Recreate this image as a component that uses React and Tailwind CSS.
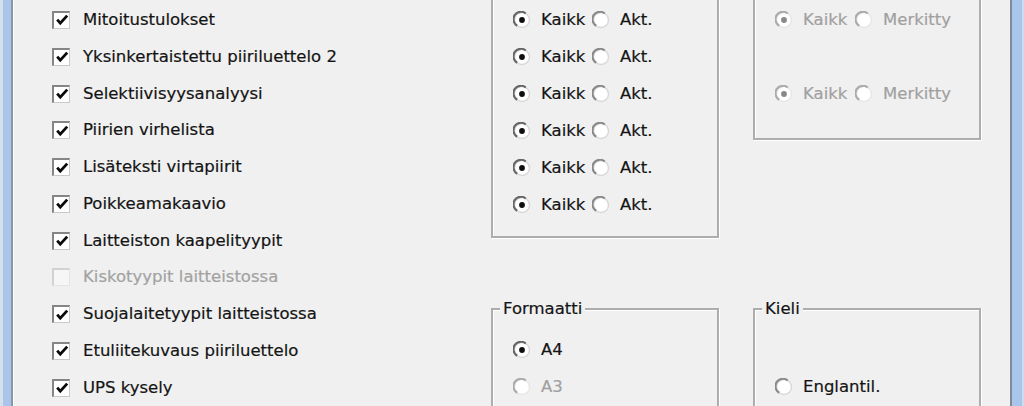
import React from "react";

const FONT = { fontFamily: '"DejaVu Sans", Verdana, sans-serif' };

function Check({ checked, disabled }) {
  return (
    <span
      className={
        "w-[18px] h-[18px] shrink-0 flex items-center justify-center border-t-2 border-l-2 border-r border-b " +
        (disabled
          ? "border-t-[#d2d2d2] border-l-[#d2d2d2] border-r-[#e4e4e4] border-b-[#e4e4e4] bg-[#f6f6f6]"
          : "border-t-[#858585] border-l-[#858585] border-r-[#c9c9c9] border-b-[#c9c9c9] bg-white")
      }
    >
      {checked && (
        <svg width="14" height="14" viewBox="0 0 14 14">
          <path d="M2.2 6.6 L5.3 10.2 L12.2 2.6" fill="none" stroke="#0a0a0a" strokeWidth="2.8" strokeLinejoin="miter" />
        </svg>
      )}
    </span>
  );
}

function Radio({ checked, disabled }) {
  const ring = disabled ? "#ababab" : checked ? "#666666" : "#8a8a8a";
  const rim = disabled ? "#e6e6e6" : "#d8d8d8";
  return (
    <svg width="18" height="18" viewBox="0 0 18 18" className="shrink-0">
      <circle cx="9" cy="9" r="7.5" fill="#ffffff" stroke={rim} strokeWidth="1.4" />
      <path d="M12.75 2.5 A7.5 7.5 0 1 0 4.18 14.75" fill="none" stroke={ring} strokeWidth="2.2" />
      {checked && <circle cx="9" cy="9" r="2.9" fill={disabled ? "#888888" : "#0f0f0f"} />}
    </svg>
  );
}

function RadioItem({ checked, disabled, label, w }) {
  return (
    <div className={"flex items-center gap-[10px] " + (w || "")}>
      <Radio checked={checked} disabled={disabled} />
      <span className={disabled ? "text-[#a0a0a0]" : "text-[#141414]"}>{label}</span>
    </div>
  );
}

const checks = [
  ["Mitoitustulokset", true, false],
  ["Yksinkertaistettu piiriluettelo 2", true, false],
  ["Selektiivisyysanalyysi", true, false],
  ["Piirien virhelista", true, false],
  ["Lisäteksti virtapiirit", true, false],
  ["Poikkeamakaavio", true, false],
  ["Laitteiston kaapelityypit", true, false],
  ["Kiskotyypit laitteistossa", false, true],
  ["Suojalaitetyypit laitteistossa", true, false],
  ["Etuliitekuvaus piiriluettelo", true, false],
  ["UPS kysely", true, false],
];

const boxCls =
  "border-2 border-[#adadad] shadow-[inset_1px_1px_0_#ffffff,1px_1px_0_#ffffff]";

export default function App() {
  return (
    <div
      className="w-[1024px] h-[406px] overflow-hidden flex bg-[#f0f0f0] text-[16.5px] leading-[20px] [-webkit-text-stroke:0.2px_currentColor]"
      style={FONT}
    >
      {/* left window frame */}
      <div className="flex shrink-0 h-full">
        <div className="w-[3px] bg-[#d6e0ec]" />
        <div className="w-[8px] bg-[#a9c6ea]" />
        <div className="w-[2px] bg-[#8b96a3]" />
        <div className="w-[1px] bg-white" />
      </div>

      {/* content */}
      <div className="flex-1 flex">
        {/* checkbox column */}
        <div className="w-[477px] shrink-0 pl-[38px] pt-[1.6px] flex flex-col">
          {checks.map(([label, checked, disabled]) => (
            <div key={label} className="h-[37.2px] flex items-center gap-[13px]">
              <Check checked={checked} disabled={disabled} />
              <span className={disabled ? "text-[#a2a2a2]" : "text-[#141414]"}>{label}</span>
            </div>
          ))}
        </div>

        {/* middle column */}
        <div className="w-[228px] shrink-0 flex flex-col">
          <div className={"-mt-[40px] pt-[39.5px] pb-[12px] pl-[20px] " + boxCls}>
            {[0, 1, 2, 3, 4, 5].map((i) => (
              <div key={i} className="h-[37px] flex items-center">
                <RadioItem checked label="Kaikk" w="w-[79px]" />
                <RadioItem label="Akt." />
              </div>
            ))}
          </div>
          <fieldset className={"mt-[61.5px] " + boxCls}>
            <legend className="ml-[7px] px-[3px] bg-[#f0f0f0] text-[#141414] leading-[20px]">Formaatti</legend>
            <div className="pl-[20px] pt-[12.5px]">
              <div className="h-[37px] flex items-center">
                <RadioItem checked label="A4" />
              </div>
              <div className="h-[37px] flex items-center">
                <RadioItem disabled label="A3" />
              </div>
            </div>
          </fieldset>
        </div>

        <div className="w-[34px] shrink-0" />

        {/* right column */}
        <div className="w-[228px] shrink-0 flex flex-col">
          <div className={"-mt-[40px] pt-[39.5px] pb-[25px] pl-[20px] " + boxCls}>
            <div className="h-[37px] flex items-center">
              <RadioItem checked disabled label="Kaikk" w="w-[80px]" />
              <RadioItem disabled label="Merkitty" />
            </div>
            <div className="h-[37px]" />
            <div className="h-[37px] flex items-center">
              <RadioItem checked disabled label="Kaikk" w="w-[80px]" />
              <RadioItem disabled label="Merkitty" />
            </div>
          </div>
          <fieldset className={"mt-[159.5px] " + boxCls}>
            <legend className="ml-[7px] px-[3px] bg-[#f0f0f0] text-[#141414] leading-[20px]">Kieli</legend>
            <div className="pl-[20px] pt-[49.5px]">
              <div className="h-[37px] flex items-center">
                <RadioItem label="Englantil." />
              </div>
            </div>
          </fieldset>
        </div>

        <div className="flex-1" />
      </div>

      {/* right window frame */}
      <div className="flex shrink-0 h-full">
        <div className="w-[2px] bg-[#7f8b99]" />
        <div className="w-[10px] bg-[#a9c6ea]" />
        <div className="w-[2px] bg-[#cadcf0]" />
      </div>
    </div>
  );
}
